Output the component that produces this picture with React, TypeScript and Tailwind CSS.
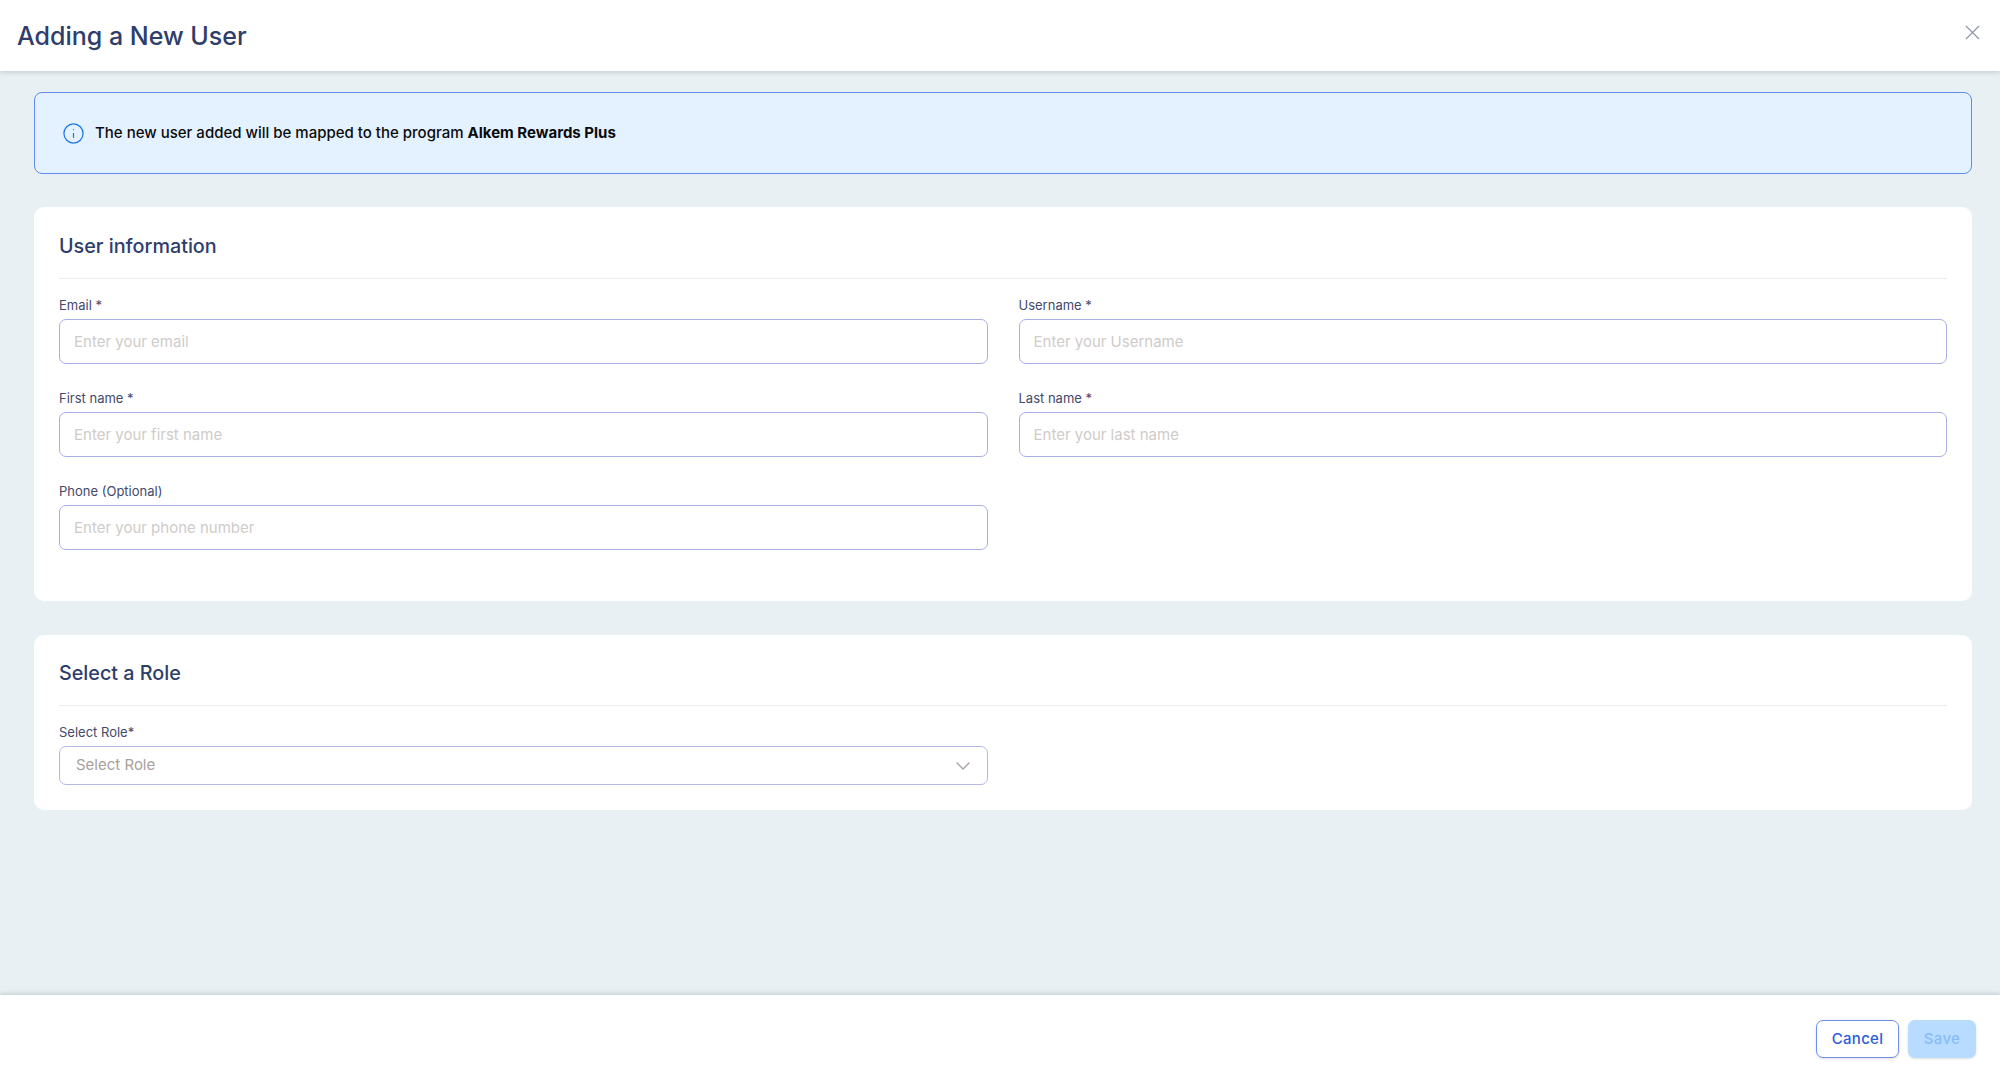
import { ChevronDown, Info, X } from 'lucide-react'

const fields = [
  { label: 'Email *', placeholder: 'Enter your email' },
  { label: 'Username *', placeholder: 'Enter your Username' },
  { label: 'First name *', placeholder: 'Enter your first name' },
  { label: 'Last name *', placeholder: 'Enter your last name' },
  { label: 'Phone (Optional)', placeholder: 'Enter your phone number' },
]

function Field({ label, placeholder }: { label: string; placeholder: string }) {
  return (
    <div>
      <label className="block h-[19px] text-[13px] leading-[19px] font-normal text-[#44496b]">{label}</label>
      <input
        placeholder={placeholder}
        className="block w-full h-[45px] mt-[4px] px-[14px] rounded-[7px] border border-[#a9aee3] bg-white text-[15px] outline-none placeholder:text-[#cfcbc9]"
      />
    </div>
  )
}

export default function App() {
  return (
    <div className="h-[1082px] flex flex-col bg-[#e9f0f3] font-['Inter',sans-serif]">
      <header className="h-[71px] shrink-0 flex items-center justify-between bg-white pl-[17px] pr-[15px] shadow-[0_1px_5px_rgba(40,60,90,0.22)] relative">
        <h1 className="pt-[2px] text-[25px] font-medium text-[#2f3d6a]">Adding a New User</h1>
        <button className="text-[#8b93a7] -mt-[7px]">
          <X size={25} strokeWidth={1.1} />
        </button>
      </header>

      <main className="flex-1 pt-[21px] pl-[34px] pr-[28px]">
        <div className="h-[82px] flex items-center gap-[10px] px-[27px] rounded-[8px] border border-[#5f8bf3] bg-[#e3f2fe]">
          <Info size={23} strokeWidth={1.25} className="text-[#1a73e8]" />
          <p className="text-[15px] font-medium text-[#0b0b0f]">
            The new user added will be mapped to the program <span className="font-bold">Alkem Rewards Plus</span>
          </p>
        </div>

        <section className="h-[394px] mt-[33px] px-[25px] rounded-[10px] bg-white">
          <h2 className="h-[72px] pt-[9px] flex items-center text-[19.75px] font-medium text-[#2f3d6a] border-b border-[#e9ecef]">User information</h2>
          <div className="grid grid-cols-2 gap-x-[31px] gap-y-[25px] pt-[17px]">
            {fields.map(f => <Field key={f.label} label={f.label} placeholder={f.placeholder} />)}
          </div>
        </section>

        <section className="h-[175px] mt-[34px] px-[25px] rounded-[10px] bg-white">
          <h2 className="h-[71px] pt-[7px] flex items-center text-[19.75px] font-medium text-[#2f3d6a] border-b border-[#e9ecef]">Select a Role</h2>
          <div className="grid grid-cols-2 gap-x-[31px] pt-[17px]">
            <div>
              <label className="block h-[19px] text-[13px] leading-[19px] text-[#44496b]">Select Role*</label>
              <button className="w-full h-[39px] mt-[4px] pl-[16px] pr-[12px] flex items-center justify-between rounded-[7px] border border-[#b4b8e6] bg-white text-[15px] text-[#a89f9c]">
                <span>Select Role</span>
                <ChevronDown size={24} strokeWidth={1.25} />
              </button>
            </div>
          </div>
        </section>
      </main>

      <footer className="h-[87px] shrink-0 flex items-start justify-end gap-[9px] pt-[25px] pr-[24px] bg-white shadow-[0_-1px_5px_rgba(40,60,90,0.22)] relative">
        <button className="w-[83px] h-[38px] rounded-[7px] border border-[#6f8fec] bg-white text-[15px] font-medium tracking-[0.3px] text-[#2d5bd7] shadow-sm">Cancel</button>
        <button className="w-[68px] h-[38px] rounded-[7px] bg-[#b8dcff] text-[15px] font-medium tracking-[0.3px] text-[#85bcfb] shadow-sm">Save</button>
      </footer>
    </div>
  )
}
